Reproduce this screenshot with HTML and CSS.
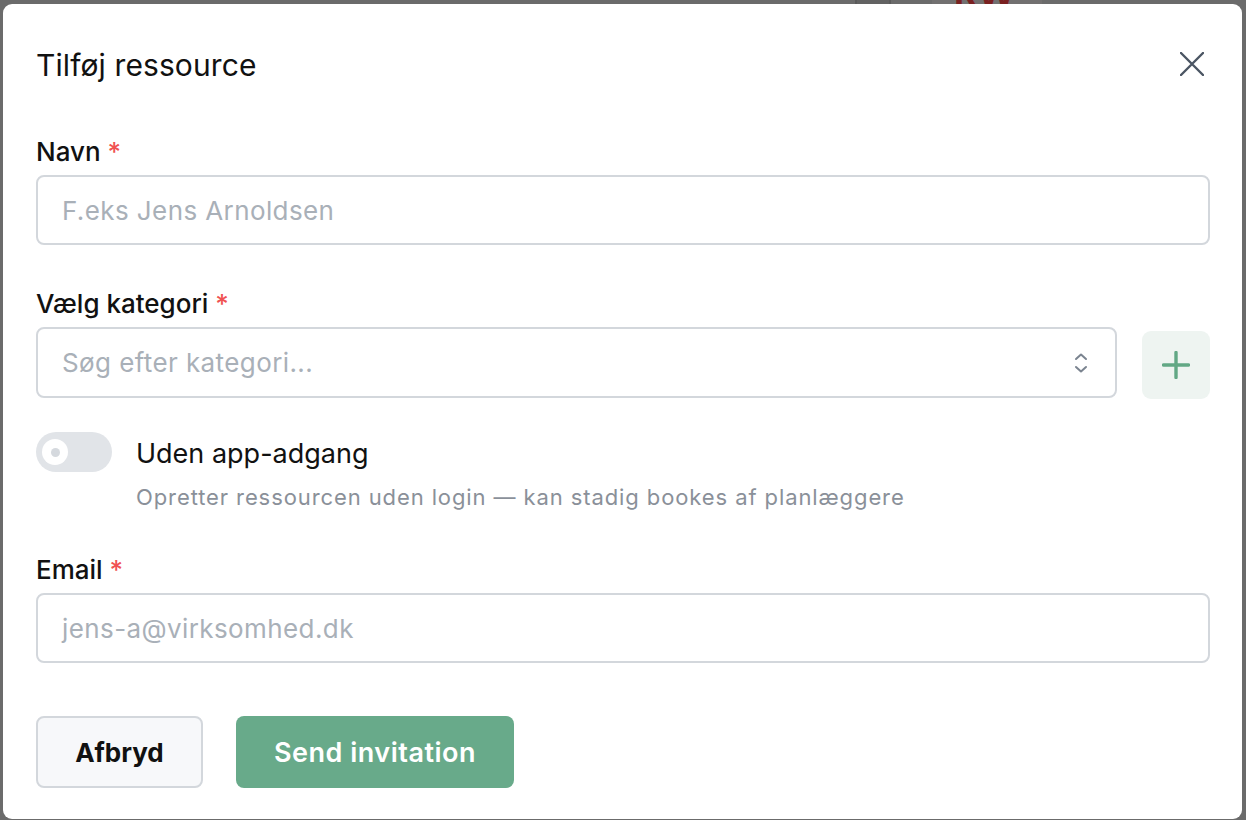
FILE: index.html
```html
<!DOCTYPE html>
<html lang="da">
<head>
<meta charset="utf-8">
<title>Tilføj ressource</title>
<link rel="stylesheet" href="styles.css">
</head>
<body>
<div class="backdrop">
  <div class="bg-strip">
    <span class="bg-line"></span>
    <span class="bg-card"><span class="bg-text">RW</span></span>
  </div>
</div>
<div class="modal" role="dialog" aria-labelledby="title">
  <div class="modal-header">
    <h2 id="title" class="modal-title">Tilføj ressource</h2>
    <button class="close-btn" aria-label="Luk">
      <svg width="24" height="24" viewBox="0 0 24 24" fill="none" stroke="#4b5563" stroke-width="2.4" stroke-linecap="round"><path d="M1 1 L23 23 M23 1 L1 23"/></svg>
    </button>
  </div>

  <div class="field">
    <label class="label">Navn <span class="req">*</span></label>
    <div class="input">F.eks Jens Arnoldsen</div>
  </div>

  <div class="field field-cat">
    <label class="label">Vælg kategori <span class="req">*</span></label>
    <div class="select-row">
      <div class="input select">
        <span>Søg efter kategori...</span>
        <svg class="chev" width="16" height="24" viewBox="0 0 16 24" fill="none" stroke="#7b8490" stroke-width="2" stroke-linecap="round" stroke-linejoin="round"><path d="M3 8 L8 3.5 L13 8"/><path d="M3 16 L8 20.5 L13 16"/></svg>
      </div>
      <button class="add-btn" aria-label="Tilføj kategori">
        <svg width="28" height="28" viewBox="0 0 28 28" fill="none" stroke="#62a885" stroke-width="3.4" stroke-linecap="round"><path d="M14 1.5 V26.5 M1.5 14 H26.5"/></svg>
      </button>
    </div>
  </div>

  <div class="toggle-row">
    <div class="toggle"><span class="knob"><span class="dot"></span></span></div>
    <div class="toggle-text">
      <div class="toggle-label">Uden app-adgang</div>
      <div class="help">Opretter ressourcen uden login — kan stadig bookes af planlæggere</div>
    </div>
  </div>

  <div class="field field-email">
    <label class="label">Email <span class="req">*</span></label>
    <div class="input">jens-a@virksomhed.dk</div>
  </div>

  <div class="actions">
    <button class="btn btn-cancel">Afbryd</button>
    <button class="btn btn-primary">Send invitation</button>
  </div>
</div>
</body>
</html>
```

FILE: styles.css
```css
* { box-sizing: border-box; }
html, body { margin: 0; padding: 0; }
body {
  width: 1246px;
  height: 820px;
  overflow: hidden;
  background: #6b6b6b;
  font-family: Inter, "Noto Sans", sans-serif;
  color: #111;
  position: relative;
}
.backdrop {
  position: absolute;
  left: 0; top: 0; right: 0; bottom: 0;
}
.bg-strip {
  display: flex;
  padding-left: 855px;
  height: 8px;
}
.bg-line {
  width: 36px;
  height: 8px;
  background: #626262;
  border-left: 2px solid #5a5a5a;
  border-right: 2px solid #5a5a5a;
}
.bg-card {
  margin-left: 41px;
  width: 110px;
  height: 8px;
  background: #727070;
  position: relative;
  overflow: hidden;
}
.bg-text {
  position: absolute;
  left: 22px;
  top: -24px;
  font-size: 36px;
  font-weight: 700;
  color: #7a2020;
  line-height: 36px;
}
.modal {
  position: absolute;
  left: 3px;
  top: 4px;
  width: 1239px;
  height: 815px;
  background: #fff;
  border-radius: 9px;
  padding: 43px 32px 32px 33px;
  display: flex;
  flex-direction: column;
}
.modal-header {
  display: flex;
  align-items: center;
  justify-content: space-between;
  height: 36px;
}
.modal-title {
  margin: 0;
  font-size: 30px;
  line-height: 36px;
  font-weight: 400;
  letter-spacing: 0.1px;
  color: #111;
}
.close-btn {
  border: 0;
  background: none;
  padding: 0;
  margin-right: 6px;
  margin-top: -3px;
  width: 24px;
  height: 24px;
  display: flex;
}
.field { display: flex; flex-direction: column; margin-top: 53px; }
.field-cat { margin-top: 43px; }
.field-email { margin-top: 43px; }
.label {
  font-size: 26px;
  line-height: 32px;
  font-weight: 500;
  color: #111;
  margin-bottom: 7px;
}
.req { color: #f05252; font-weight: 500; }
.input {
  height: 70px;
  border: 2px solid #d3d7dc;
  border-radius: 8px;
  padding: 0 24px;
  display: flex;
  align-items: center;
  font-size: 26px;
  letter-spacing: 0.4px;
  color: #a9b0b8;
}
.select-row {
  display: flex;
  align-items: flex-start;
  gap: 25px;
}
.select {
  flex: 1;
  height: 71px;
  justify-content: space-between;
  padding-right: 26px;
}
.chev { flex: none; }
.add-btn {
  flex: none;
  margin-top: 4px;
  width: 68px;
  height: 68px;
  border: 0;
  border-radius: 9px;
  background: #eef4f1;
  display: flex;
  align-items: center;
  justify-content: center;
  padding: 0;
}
.toggle-row {
  display: flex;
  margin-top: 33px;
  gap: 24px;
}
.toggle {
  flex: none;
  width: 76px;
  height: 40px;
  border-radius: 20px;
  background: #e1e4e8;
  padding: 7px 0 0 6px;
}
.knob {
  display: flex;
  align-items: center;
  justify-content: center;
  width: 26px;
  height: 26px;
  border-radius: 50%;
  background: #fff;
}
.dot {
  width: 9px;
  height: 9px;
  border-radius: 50%;
  background: #d5d9de;
}
.toggle-text { display: flex; flex-direction: column; }
.toggle-label {
  font-size: 27px;
  line-height: 40px;
  margin-top: 2px;
  color: #111;
}
.help {
  margin-top: 9px;
  font-size: 22px;
  line-height: 28px;
  letter-spacing: 0.9px;
  color: #8a9099;
}
.actions {
  display: flex;
  gap: 33px;
  margin-top: 53px;
}
.btn {
  height: 72px;
  border-radius: 8px;
  font-family: Inter, "Noto Sans", sans-serif;
  font-size: 26px;
  font-weight: 700;
  padding: 0;
}
.btn-cancel {
  width: 167px;
  background: #f7f8fa;
  border: 2px solid #d3d7dc;
  color: #111;
}
.btn-primary {
  width: 278px;
  background: #68aa8a;
  border: 0;
  color: #fff;
  font-size: 27px;
  letter-spacing: 0.5px;
  font-weight: 600;
}
```
